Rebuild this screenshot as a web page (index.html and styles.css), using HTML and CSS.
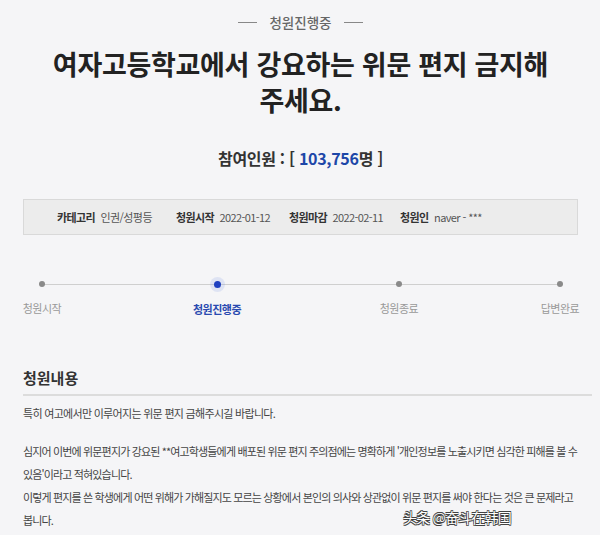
FILE: index.html
```html
<!DOCTYPE html>
<html lang="ko">
<head>
<meta charset="utf-8">
<link rel="stylesheet" href="styles.css">
</head>
<body>
<main class="page">
  <div class="status"><span class="dash"></span><span class="status-text">청원진행중</span><span class="dash"></span></div>
  <h1 class="title">여자고등학교에서 강요하는 위문 편지 금지해<br>주세요.</h1>
  <p class="count">참여인원 : [ <span class="num">103,756</span>명 ]</p>
  <div class="info">
    <span class="item i1"><b>카테고리</b> 인권/성평등</span>
    <span class="item i2"><b>청원시작</b> 2022-01-12</span>
    <span class="item i3"><b>청원마감</b> 2022-02-11</span>
    <span class="item"><b>청원인</b> naver - ***</span>
  </div>
  <div class="steps">
    <div class="track"></div>
    <div class="step"><span class="dot"></span><span class="label">청원시작</span></div>
    <div class="step active"><span class="dot"></span><span class="label">청원진행중</span></div>
    <div class="step"><span class="dot"></span><span class="label">청원종료</span></div>
    <div class="step"><span class="dot"></span><span class="label">답변완료</span></div>
  </div>
  <section class="content">
    <h2 class="sec-title">청원내용</h2>
    <p class="para">특히 여고에서만 이루어지는 위문 편지 금해주시길 바랍니다.</p>
    <p class="para long">심지어 이번에 위문편지가 강요된 **여고학생들에게 배포된 위문 편지 주의점에는 명확하게 '개인정보를 노출시키면 심각한 피해를 볼 수 있음'이라고 적혀있습니다.<br>이렇게 편지를 쓴 학생에게 어떤 위해가 가해질지도 모르는 상황에서 본인의 의사와 상관없이 위문 편지를 써야 한다는 것은 큰 문제라고 봅니다.</p>
  </section>
  <div class="watermark">头条 @奋斗在韩国</div>
</main>
</body>
</html>
```
FILE: styles.css
```css
html, body {
  margin: 0;
  padding: 0;
  background: #f5f5f7;
}
body {
  font-family: "Noto Sans CJK KR", "Noto Sans", sans-serif;
  color: #222;
}
.page {
  position: relative;
  width: 600px;
  height: 535px;
  overflow: hidden;
  box-sizing: border-box;
  padding: 12px 22px 0 23px;
}
.status {
  display: flex;
  justify-content: center;
  align-items: center;
  gap: 12px;
  height: 20px;
}
.dash {
  width: 19px;
  height: 1px;
  background: #888;
}
.status-text {
  font-size: 13.5px;
  color: #666;
  font-weight: 500;
}
.title {
  margin: 14px 0 0;
  text-align: center;
  font-size: 27px;
  line-height: 36px;
  font-weight: 700;
  color: #222;
  letter-spacing: -0.3px;
}
.count {
  margin: 28px 0 0;
  text-align: center;
  font-size: 16px;
  line-height: 24px;
  font-weight: 700;
  color: #333;
  letter-spacing: -0.3px;
}
.num {
  color: #1d47a8;
}
.info {
  margin: 29px 0 0;
  height: 36px;
  box-sizing: border-box;
  background: #ececec;
  border: 1px solid #d9d9d9;
  display: flex;
  align-items: center;
  padding-left: 33px;
  font-size: 11px;
  letter-spacing: -0.6px;
  color: #555;
  white-space: nowrap;
}
.item { flex-shrink: 0; }
.i1 { width: 119px; }
.i2 { width: 113px; }
.i3 { width: 111px; }
.item b { color: #333; font-weight: 700; margin-right: 3px; }
.steps {
  position: relative;
  display: grid;
  grid-template-columns: 175px 182px 161px 60px;
  margin: 36px 0 0 -11px;
  height: 50px;
}
.track {
  position: absolute;
  left: 30px;
  width: 518px;
  top: 13px;
  height: 1px;
  background: #cfcfcf;
}
.step {
  position: relative;
  display: flex;
  flex-direction: column;
  align-items: center;
  width: 60px;
}
.dot {
  width: 6px;
  height: 6px;
  border-radius: 50%;
  background: #8a8a8a;
  margin-top: 10px;
}
.active .dot {
  width: 7px;
  height: 7px;
  background: #1e3fc0;
  box-shadow: 0 0 0 4px rgba(120, 150, 230, 0.18);
}
.label {
  margin-top: 13px;
  font-size: 11px;
  letter-spacing: -0.5px;
  color: #999;
  white-space: nowrap;
}
.active .label { color: #2a4ab0; font-weight: 700; }
.content { margin-top: 45px; }
.sec-title {
  margin: 0 -14px 0 0;
  font-size: 15px;
  font-weight: 700;
  color: #333;
  line-height: 24px;
  padding-bottom: 4px;
  border-bottom: 2px solid #dcdcdc;
}
.para {
  margin: 6px 0 0;
  font-size: 11px;
  letter-spacing: -0.7px;
  line-height: 23px;
  color: #444;
}
.para.long { margin-top: 15px; letter-spacing: -0.85px; }
.watermark {
  position: absolute;
  left: 403px;
  top: 507px;
  font-size: 14px;
  letter-spacing: -0.8px;
  font-family: "Noto Sans CJK SC", sans-serif;
  color: #fff;
  text-shadow: 0 0 1px #333, 0.6px 0.6px 0 #444, -0.6px -0.6px 0 #444, 0.6px -0.6px 0 #444, -0.6px 0.6px 0 #444;
}
```
